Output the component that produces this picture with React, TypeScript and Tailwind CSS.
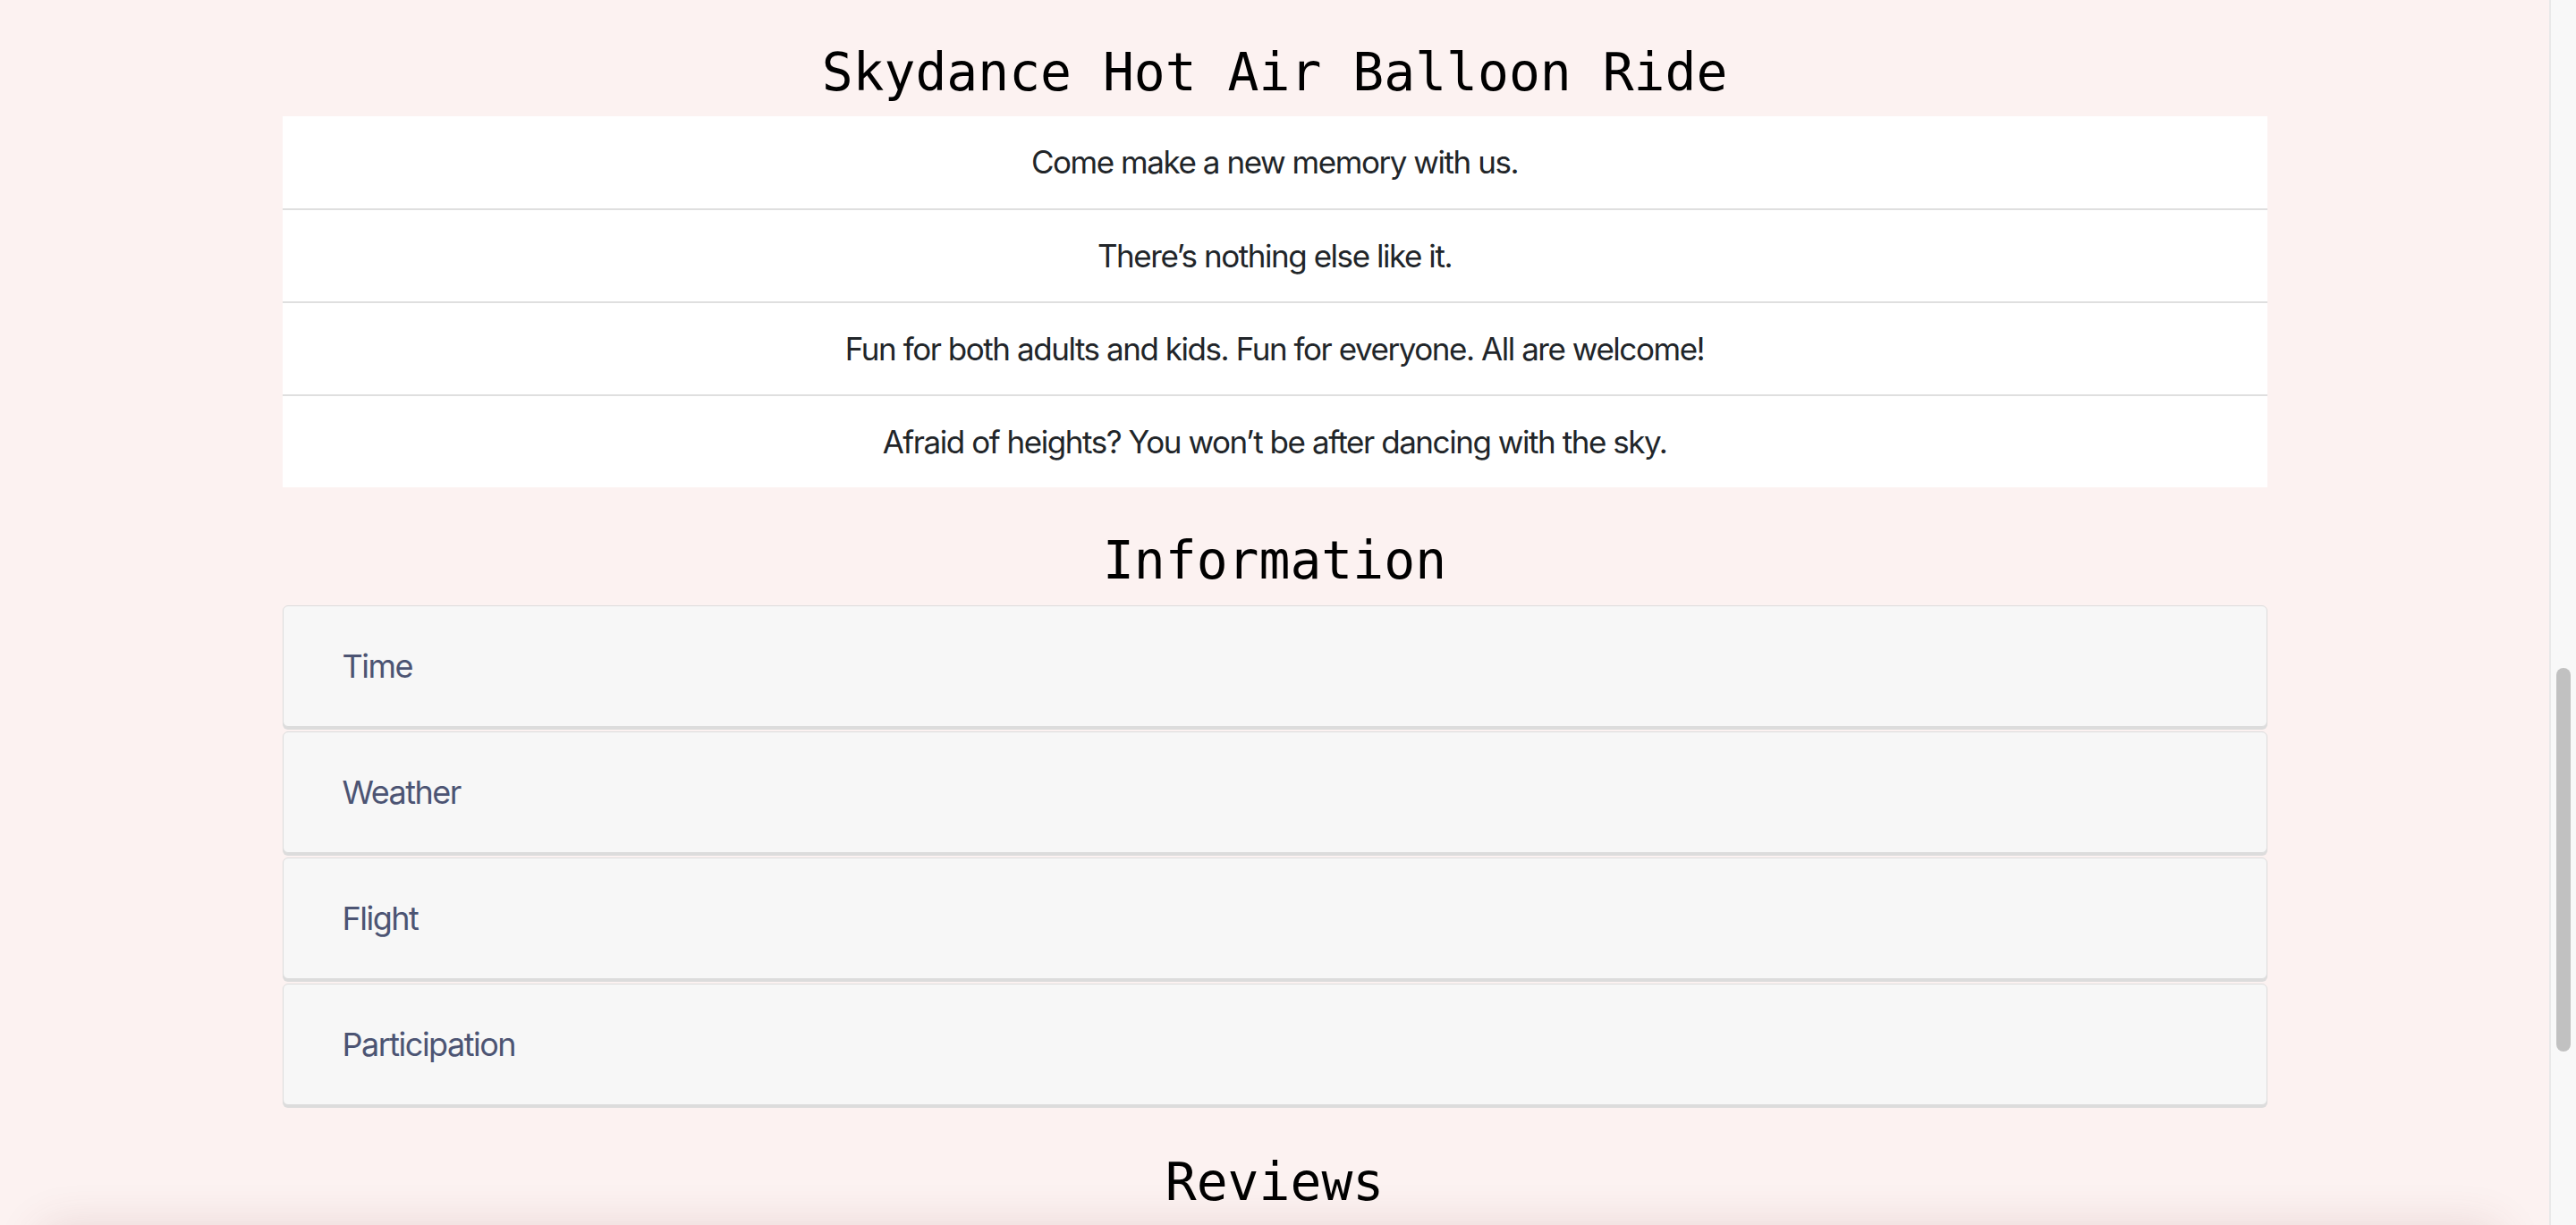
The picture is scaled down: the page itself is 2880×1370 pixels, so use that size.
import React from "react";

const taglines = [
  "Come make a new memory with us.",
  "There’s nothing else like it.",
  "Fun for both adults and kids. Fun for everyone. All are welcome!",
  "Afraid of heights? You won’t be after dancing with the sky.",
];

const infoItems = ["Time", "Weather", "Flight", "Participation"];

const headingClass =
  "font-['DejaVu_Sans_Mono',monospace] text-[58px] leading-[70px] font-normal text-black text-center";

export default function App() {
  return (
    <div className="relative flex h-[1370px] w-full overflow-hidden bg-[#fcf2f1]">
      <main className="flex flex-1 flex-col items-center pt-[46px]">
        <h1 className={headingClass}>Skydance Hot Air Balloon Ride</h1>

        {/* Tagline list */}
        <ul className="mt-[14px] w-[2219px] bg-white">
          {taglines.map((line, i) => (
            <li
              key={line}
              className={
                "flex items-center justify-center font-['Inter',sans-serif] text-[35px] tracking-[-1.45px] text-[#212529] " +
                (i > 0 ? "h-[104px] border-t-2 border-[#dfdfdf]" : "h-[103px]")
              }
            >
              {line}
            </li>
          ))}
        </ul>

        <h2 className={"mt-[47px] " + headingClass}>Information</h2>

        {/* Accordion */}
        <div className="mt-[15px] flex w-[2219px] flex-col gap-[5px]">
          {infoItems.map((item) => (
            <button
              key={item}
              className="flex h-[136px] items-center rounded-[6px] border border-[#dcdcdc] bg-[#f7f7f7] pl-[66px] text-left font-['Inter',sans-serif] text-[36px] tracking-[-1.5px] text-[#4c5473] shadow-[0_3px_0_#dcdcdc]"
            >
              {item}
            </button>
          ))}
        </div>

        <h2 className={"mt-[51px] " + headingClass}>Reviews</h2>
      </main>

      {/* Scrollbar */}
      <aside className="relative w-[30px] border-l-2 border-[#e9e9e9] bg-[#f8f8f8]">
        <div className="absolute left-[6px] top-[747px] h-[429px] w-[16px] rounded-full bg-[#c1c1c1]" />
      </aside>

      {/* Shadow of a fixed bar just below the view */}
      <div className="pointer-events-none absolute bottom-[-60px] left-[40px] right-[80px] h-[60px] rounded-[30px] bg-white shadow-[0_0_50px_rgba(120,60,60,0.14)]" />
    </div>
  );
}
